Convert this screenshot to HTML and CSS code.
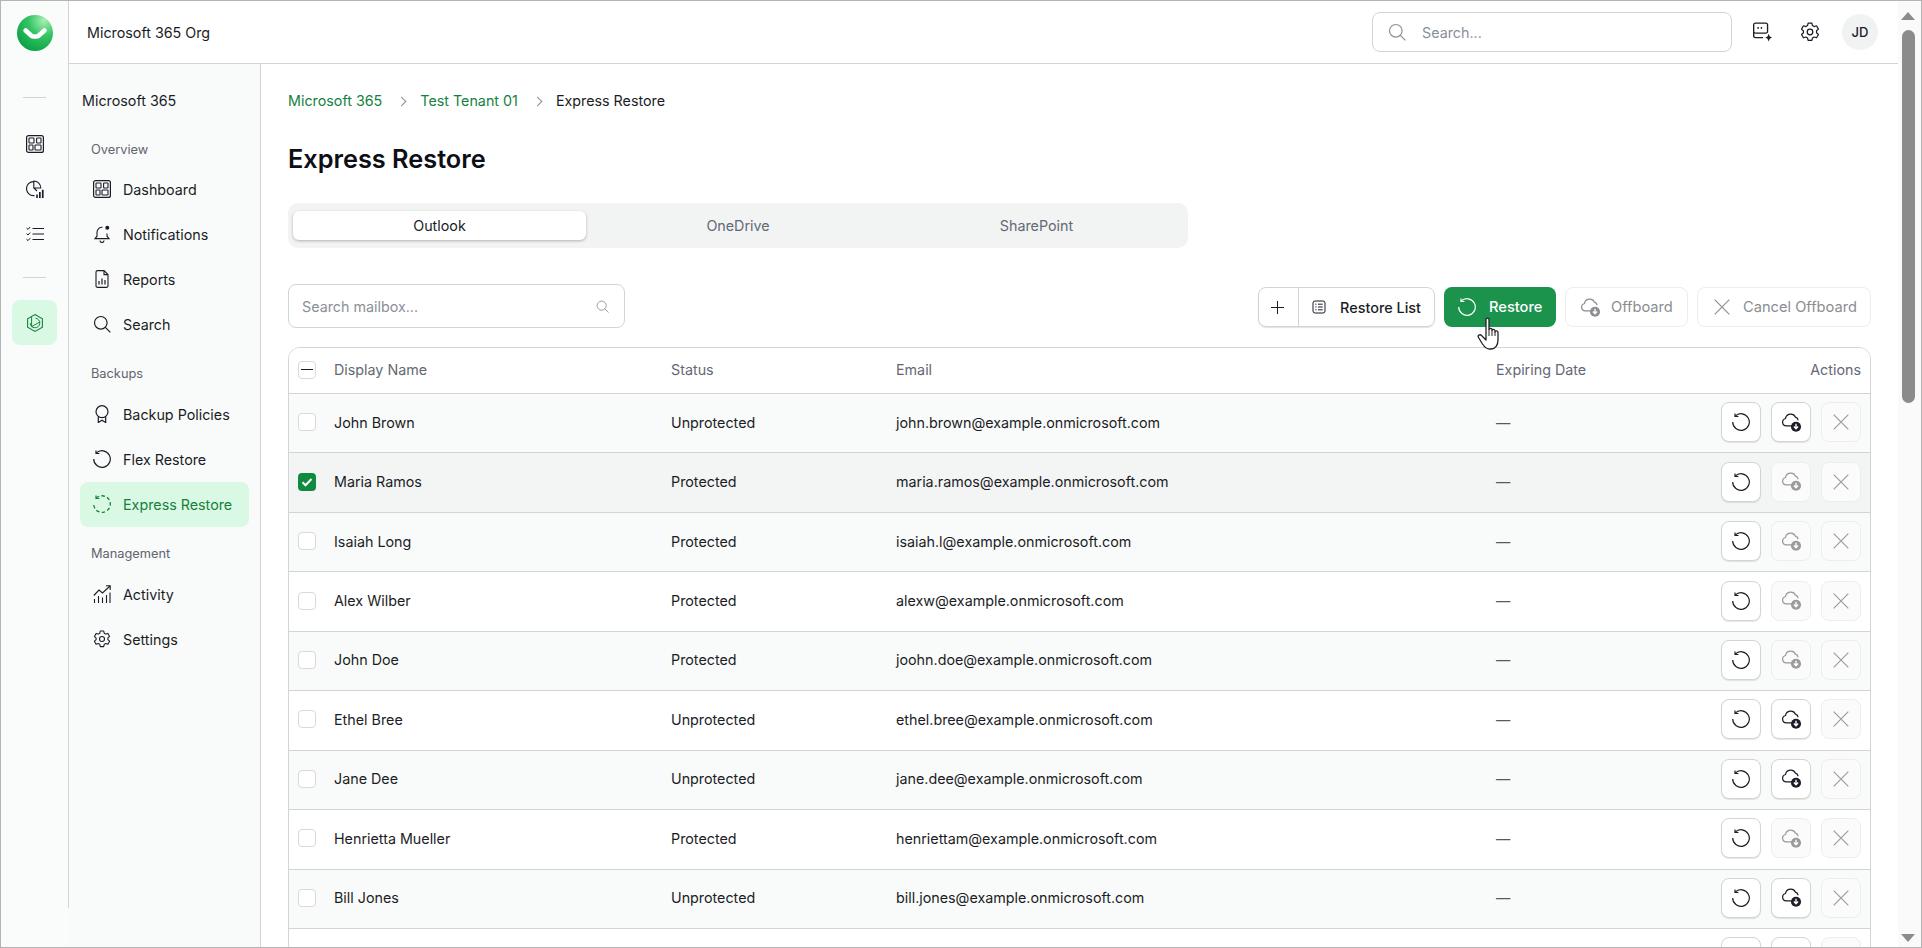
FILE: index.html
```html
<!DOCTYPE html>
<html lang="en">
<head>
    <meta charset="UTF-8">
    <title>Express Restore</title>
    <link rel="stylesheet" href="styles.css">
</head>
<body>
    <svg class="sprites" xmlns="http://www.w3.org/2000/svg">
        <symbol id="i-dash" viewBox="0 0 18 18"><rect x="0.6" y="0.6" width="16.8" height="16.8" rx="2" fill="none" stroke="currentColor" stroke-width="1.2"/><rect x="3" y="3" width="5" height="5" rx="0.6" fill="none" stroke="currentColor" stroke-width="1.1"/><rect x="10.6" y="3" width="4.4" height="5" rx="0.6" fill="none" stroke="currentColor" stroke-width="1.1"/><rect x="3" y="10" width="4" height="5" rx="0.6" fill="none" stroke="currentColor" stroke-width="1.1"/><rect x="9" y="10" width="6" height="5" rx="0.6" fill="none" stroke="currentColor" stroke-width="1.1"/></symbol>
        <symbol id="i-pie" viewBox="0 0 18 18"><path d="M7.5 1.6a7 7 0 1 0 0 14h1M7.8 1v7h7a7 7 0 0 0-7-7zM8 8l3 3" fill="none" stroke="currentColor" stroke-width="1.1"/><path d="M10.2 14.5h1.6V18h-1.6zM13 12h1.7v6H13zM15.9 9.8h1.7V18h-1.7z" fill="currentColor"/></symbol>
        <symbol id="i-tasks" viewBox="0 0 18 18"><path d="M6.5 3.5H18M6.5 9H18M6.5 14.5H18" fill="none" stroke="currentColor" stroke-width="1.1"/><path d="M.5 3l1.500 1.400L4.200 2M.5 8.600L2 10l2.200-2.400M.5 14.200L2 15.600l2.200-2.400" fill="none" stroke="currentColor" stroke-width="1"/></symbol>
        <symbol id="i-hex" viewBox="0 0 18 18"><path d="M9 .6l7.400 4.200v8.400l-7.400 4.200-7.400-4.200V4.800z" fill="none" stroke="currentColor" stroke-width="1.100"/><path d="M9.500 4.200a4.800 4.800 0 1 1-5.300 4.800M5.600 2.800v9.900l8.600-4.900" fill="none" stroke="currentColor" stroke-width="1"/></symbol>
        <symbol id="i-bell" viewBox="0 0 18 18"><path d="M9.500 2.300A5 5 0 0 0 4 7.200v4L2 13.600h14l-2-2.400V8.500M7 15.500a2 2 0 0 0 4 0" fill="none" stroke="currentColor" stroke-width="1.100"/><circle cx="14.300" cy="2.800" r="2" fill="currentColor"/></symbol>
        <symbol id="i-doc" viewBox="0 0 18 18"><path d="M11 .6H4.500A1.500 1.500 0 0 0 3 2.100v13.800a1.500 1.500 0 0 0 1.500 1.500h9a1.500 1.500 0 0 0 1.500-1.500V4.600zM11 .6v4h4" fill="none" stroke="currentColor" stroke-width="1.100"/><path d="M6 11v3.500M9 8.500v6M12 10v4.500" fill="none" stroke="currentColor" stroke-width="1.200"/></symbol>
        <symbol id="i-search" viewBox="0 0 18 18"><circle cx="7.800" cy="7.800" r="6.300" fill="none" stroke="currentColor" stroke-width="1.200"/><path d="M12.300 12.300l5 5" fill="none" stroke="currentColor" stroke-width="1.200"/></symbol>
        <symbol id="i-award" viewBox="0 0 18 18"><circle cx="9" cy="6.700" r="6" fill="none" stroke="currentColor" stroke-width="1.200"/><path d="M5.300 11.500v6L9 15.300l3.700 2.200v-6" fill="none" stroke="currentColor" stroke-width="1.200"/></symbol>
        <symbol id="i-restore" viewBox="0 0 18 18"><path d="M3.200 3.100A8.300 8.300 0 1 1 .7 9" fill="none" stroke="currentColor" stroke-width="1.200"/><path d="M3 .4v3.100h3.400" fill="none" stroke="currentColor" stroke-width="1.200"/></symbol>
        <symbol id="i-restore-dash" viewBox="0 0 18 18"><path d="M3.200 3.100A8.300 8.300 0 1 1 .7 9" fill="none" stroke="currentColor" stroke-width="1.300" stroke-dasharray="3.500 2.300"/><path d="M3 .4v3.100h3.400" fill="none" stroke="currentColor" stroke-width="1.200"/></symbol>
        <symbol id="i-activity" viewBox="0 0 18 18"><path d="M.8 10.500L6 5l3.500 3L17 1M13 .8h4.200V5" fill="none" stroke="currentColor" stroke-width="1.100"/><path d="M1.500 14v4M5.500 11v7M9.500 12.500V18M13.500 10v8M17 7.500V18" fill="none" stroke="currentColor" stroke-width="1.100"/></symbol>
        <symbol id="i-gear" viewBox="0 0 18 18"><path d="M7.300 1h3.400l.5 2.200 1.500.9 2.200-.7 1.700 3-1.700 1.500v1.800l1.700 1.500-1.700 3-2.200-.7-1.500.9-.5 2.200H7.300l-.5-2.200-1.500-.9-2.200.7-1.700-3 1.700-1.500V8.100L1.400 6.400l1.700-3 2.200.7 1.500-.9z" fill="none" stroke="currentColor" stroke-width="1.100" stroke-linejoin="round"/><circle cx="9" cy="9" r="2.500" fill="none" stroke="currentColor" stroke-width="1.100"/></symbol>
        <symbol id="i-chat" viewBox="0 0 18 18"><path d="M3 1h9.500A1.500 1.500 0 0 1 14 2.500v6A1.500 1.500 0 0 1 12.500 10H3A1.500 1.500 0 0 1 1.500 8.500v-6A1.500 1.500 0 0 1 3 1zM1.500 9v3.500A1.500 1.500 0 0 0 3 14h7" fill="none" stroke="currentColor" stroke-width="1.200"/><path d="M5.500 4.500v1.500M8.500 4.500v1.500" stroke="currentColor" stroke-width="1.300"/><path d="M15 10.500l1 2.500 2 1-2 1-1 2.500-1-2.500-2-1 2-1z" fill="currentColor"/></symbol>
        <symbol id="i-cloud" viewBox="0 0 20 20"><path d="M11.500 13.300H5a3.600 3.600 0 0 1-.7-7.100 5 5 0 0 1 9.500-1.300 3.500 3.500 0 0 1 2.500 3" fill="none" stroke="currentColor" stroke-width="1.200"/><circle cx="14.300" cy="14" r="4.800" fill="currentColor"/><path d="M14.300 11.300v4.500M12.300 13.900l2 2 2-2" fill="none" stroke="#fff" stroke-width="1.300"/></symbol>
        <symbol id="i-x" viewBox="0 0 16 16"><path d="M1.500 1.500l13 13M14.500 1.500l-13 13" fill="none" stroke="currentColor" stroke-width="1"/></symbol>
        <symbol id="i-list" viewBox="0 0 14 14"><rect x="1" y="1" width="12" height="12" rx="2" fill="none" stroke="currentColor" stroke-width="1"/><path d="M3.300 4.200h1.200M6 4.200h4.700M3.300 7h1.200M6 7h4.700M3.300 9.800h1.200M6 9.800h4.700" fill="none" stroke="currentColor" stroke-width="1"/></symbol>
    </svg>

    <div class="frame">
        <aside class="rail">
            <div class="logo">
                <svg width="36" height="36" viewBox="0 0 36 36">
                    <defs><radialGradient id="logo-fill" cx="0.75" cy="0.15" r="0.95"><stop offset="0" stop-color="#a8f0b4"/><stop offset="0.45" stop-color="#35c464"/><stop offset="1" stop-color="#08a043"/></radialGradient></defs>
                    <circle cx="18" cy="18" r="18" fill="url(#logo-fill)"/>
                    <path d="M8.600 15.500L14.500 20.800Q15.500 21.500 17 21.500H19Q20.500 21.500 21.500 20.800L27.400 15.500" fill="none" stroke="#fff" stroke-width="4.600" stroke-linecap="round" stroke-linejoin="round"/>
                </svg>
            </div>
            <div class="rail-sep"></div>
            <div class="rail-item"><svg class="ico"><use href="#i-dash"/></svg></div>
            <div class="rail-item"><svg class="ico"><use href="#i-pie"/></svg></div>
            <div class="rail-item"><svg class="ico"><use href="#i-tasks"/></svg></div>
            <div class="rail-sep rail-sep-low"></div>
            <div class="rail-item rail-active"><svg class="ico"><use href="#i-hex"/></svg></div>
        </aside>

        <div class="workspace">
            <header class="topbar">
                <div class="org">Microsoft 365 Org</div>
                <div class="top-search">
                    <svg class="ico"><use href="#i-search"/></svg>
                    <span>Search...</span>
                </div>
                <svg class="ico top-icon"><use href="#i-chat"/></svg>
                <svg class="ico top-icon"><use href="#i-gear"/></svg>
                <div class="avatar">JD</div>
            </header>

            <div class="columns">
                <nav class="sidebar">
                    <div class="side-title">Microsoft 365</div>
                    <div class="side-group">Overview</div>
                    <a class="side-link"><svg class="ico"><use href="#i-dash"/></svg>Dashboard</a>
                    <a class="side-link"><svg class="ico"><use href="#i-bell"/></svg>Notifications</a>
                    <a class="side-link"><svg class="ico"><use href="#i-doc"/></svg>Reports</a>
                    <a class="side-link"><svg class="ico"><use href="#i-search"/></svg>Search</a>
                    <div class="side-group">Backups</div>
                    <a class="side-link"><svg class="ico"><use href="#i-award"/></svg>Backup Policies</a>
                    <a class="side-link"><svg class="ico"><use href="#i-restore"/></svg>Flex Restore</a>
                    <a class="side-link side-active"><svg class="ico"><use href="#i-restore-dash"/></svg>Express Restore</a>
                    <div class="side-group">Management</div>
                    <a class="side-link"><svg class="ico"><use href="#i-activity"/></svg>Activity</a>
                    <a class="side-link"><svg class="ico"><use href="#i-gear"/></svg>Settings</a>
                </nav>

                <main class="content">
                    <div class="crumbs">
                        <a>Microsoft 365</a><span class="crumb-sep"></span><a>Test Tenant 01</a><span class="crumb-sep"></span><span>Express Restore</span>
                    </div>
                    <h1>Express Restore</h1>
                    <div class="tabs">
                        <div class="tab tab-active">Outlook</div>
                        <div class="tab">OneDrive</div>
                        <div class="tab">SharePoint</div>
                    </div>

                    <div class="toolbar">
                        <div class="box-search">
                            <span>Search mailbox...</span>
                            <svg class="ico-sm"><use href="#i-search"/></svg>
                        </div>
                        <div class="btn-join">
                            <span class="join-plus"></span>
                            <span class="join-list"><svg class="ico-list"><use href="#i-list"/></svg>Restore List</span>
                        </div>
                        <div class="btn btn-green"><svg class="ico"><use href="#i-restore"/></svg>Restore</div>
                        <div class="btn btn-off btn-offboard"><svg class="ico-cloud"><use href="#i-cloud"/></svg>Offboard</div>
                        <div class="btn btn-off btn-cancel"><svg class="ico-x"><use href="#i-x"/></svg>Cancel Offboard</div>
                    </div>

                    <div class="table">
                        <div class="row row-head">
                            <div><span class="check check-mixed"></span></div>
                            <div>Display Name</div>
                            <div>Status</div>
                            <div>Email</div>
                            <div>Expiring Date</div>
                            <div class="cell-actions">Actions</div>
                        </div>

                        <div class="row">
                            <div><span class="check"></span></div><div>John Brown</div><div>Unprotected</div><div>john.brown@example.onmicrosoft.com</div><div class="dash">—</div>
                            <div class="cell-actions"><span class="act"><svg class="ico"><use href="#i-restore"/></svg></span><span class="act"><svg class="ico-cloud"><use href="#i-cloud"/></svg></span><span class="act act-off"><svg class="ico-x"><use href="#i-x"/></svg></span></div>
                        </div>
                        <div class="row row-selected">
                            <div><span class="check check-on"><svg viewBox="0 0 18 18"><path d="M4.500 9.300l3 3 6-6.300" fill="none" stroke="#fff" stroke-width="2"/></svg></span></div><div>Maria Ramos</div><div>Protected</div><div>maria.ramos@example.onmicrosoft.com</div><div class="dash">—</div>
                            <div class="cell-actions"><span class="act"><svg class="ico"><use href="#i-restore"/></svg></span><span class="act act-off"><svg class="ico-cloud"><use href="#i-cloud"/></svg></span><span class="act act-off"><svg class="ico-x"><use href="#i-x"/></svg></span></div>
                        </div>
                        <div class="row">
                            <div><span class="check"></span></div><div>Isaiah Long</div><div>Protected</div><div>isaiah.l@example.onmicrosoft.com</div><div class="dash">—</div>
                            <div class="cell-actions"><span class="act"><svg class="ico"><use href="#i-restore"/></svg></span><span class="act act-off"><svg class="ico-cloud"><use href="#i-cloud"/></svg></span><span class="act act-off"><svg class="ico-x"><use href="#i-x"/></svg></span></div>
                        </div>
                        <div class="row">
                            <div><span class="check"></span></div><div>Alex Wilber</div><div>Protected</div><div>alexw@example.onmicrosoft.com</div><div class="dash">—</div>
                            <div class="cell-actions"><span class="act"><svg class="ico"><use href="#i-restore"/></svg></span><span class="act act-off"><svg class="ico-cloud"><use href="#i-cloud"/></svg></span><span class="act act-off"><svg class="ico-x"><use href="#i-x"/></svg></span></div>
                        </div>
                        <div class="row">
                            <div><span class="check"></span></div><div>John Doe</div><div>Protected</div><div>joohn.doe@example.onmicrosoft.com</div><div class="dash">—</div>
                            <div class="cell-actions"><span class="act"><svg class="ico"><use href="#i-restore"/></svg></span><span class="act act-off"><svg class="ico-cloud"><use href="#i-cloud"/></svg></span><span class="act act-off"><svg class="ico-x"><use href="#i-x"/></svg></span></div>
                        </div>
                        <div class="row">
                            <div><span class="check"></span></div><div>Ethel Bree</div><div>Unprotected</div><div>ethel.bree@example.onmicrosoft.com</div><div class="dash">—</div>
                            <div class="cell-actions"><span class="act"><svg class="ico"><use href="#i-restore"/></svg></span><span class="act"><svg class="ico-cloud"><use href="#i-cloud"/></svg></span><span class="act act-off"><svg class="ico-x"><use href="#i-x"/></svg></span></div>
                        </div>
                        <div class="row">
                            <div><span class="check"></span></div><div>Jane Dee</div><div>Unprotected</div><div>jane.dee@example.onmicrosoft.com</div><div class="dash">—</div>
                            <div class="cell-actions"><span class="act"><svg class="ico"><use href="#i-restore"/></svg></span><span class="act"><svg class="ico-cloud"><use href="#i-cloud"/></svg></span><span class="act act-off"><svg class="ico-x"><use href="#i-x"/></svg></span></div>
                        </div>
                        <div class="row">
                            <div><span class="check"></span></div><div>Henrietta Mueller</div><div>Protected</div><div>henriettam@example.onmicrosoft.com</div><div class="dash">—</div>
                            <div class="cell-actions"><span class="act"><svg class="ico"><use href="#i-restore"/></svg></span><span class="act act-off"><svg class="ico-cloud"><use href="#i-cloud"/></svg></span><span class="act act-off"><svg class="ico-x"><use href="#i-x"/></svg></span></div>
                        </div>
                        <div class="row">
                            <div><span class="check"></span></div><div>Bill Jones</div><div>Unprotected</div><div>bill.jones@example.onmicrosoft.com</div><div class="dash">—</div>
                            <div class="cell-actions"><span class="act"><svg class="ico"><use href="#i-restore"/></svg></span><span class="act"><svg class="ico-cloud"><use href="#i-cloud"/></svg></span><span class="act act-off"><svg class="ico-x"><use href="#i-x"/></svg></span></div>
                        </div>
                        <div class="row">
                            <div></div><div></div><div></div><div></div><div></div>
                            <div class="cell-actions"><span class="act"><svg class="ico"><use href="#i-restore"/></svg></span><span class="act"><svg class="ico-cloud"><use href="#i-cloud"/></svg></span><span class="act act-off"><svg class="ico-x"><use href="#i-x"/></svg></span></div>
                        </div>
                    </div>
                </main>
            </div>
        </div>

        <div class="scrollbar">
            <span class="arrow-up"></span>
            <span class="thumb"></span>
            <span class="arrow-down"></span>
        </div>

        <svg class="hand" width="26" height="33" viewBox="0 0 26 33">
            <path d="M9 2.500C9 .6 12 .6 12 2.500V12.500C12 11 15 11 15 12.800V13.500C15 12 18 12 18 14V15C18 13.500 21 13.500 21 15.500V23C21 28 18.500 32 14 32H12.500C9 32 7.500 30 5.500 27L1.500 20.500C.3 18.500 3 16.800 4.500 18.500L9 23z" fill="#fff" stroke="#222" stroke-width="1.300" stroke-linejoin="round"/>
            <path d="M12 12.500V19M15 13.500V19M18 15V19" fill="none" stroke="#222" stroke-width="1"/>
        </svg>
    </div>
</body>
</html>
```
FILE: styles.css
```css
* {
    box-sizing: border-box;
}
html, body {
    margin: 0;
    height: 100%;
    overflow: hidden;
}
body {
    font-family: Inter, "Noto Sans", sans-serif;
    font-size: 14.3px;
    color: #1b1d26;
    background: #fff;
}
.sprites {
    position: absolute;
    width: 0;
    height: 0;
}
.frame {
    position: relative;
    display: flex;
    width: 1922px;
    height: 948px;
    border: 1px solid #b4b4b4;
    overflow: hidden;
}
.ico {
    width: 18px;
    height: 18px;
    flex: none;
}
.ico-sm {
    width: 13px;
    height: 13px;
    flex: none;
}
.ico-list {
    width: 14px;
    height: 14px;
    flex: none;
}
.ico-cloud {
    width: 21px;
    height: 21px;
    flex: none;
}
.ico-x {
    width: 18px;
    height: 18px;
    flex: none;
}

/* left rail */
.rail {
    position: relative;
    display: flex;
    flex-direction: column;
    align-items: center;
    width: 68px;
    flex: none;
    padding-right: 1px;
    background: #fafbfb;
}
.rail::after {
    content: "";
    position: absolute;
    top: 0;
    right: 0;
    bottom: 39px;
    width: 1px;
    background: #d3d5d5;
}
.logo {
    height: 36px;
    margin: 14px 0 0 1px;
}
.logo svg {
    display: block;
}
.rail-sep {
    width: 23px;
    height: 1px;
    margin: 46px 0 23px;
    background: #d3d5d5;
}
.rail-sep-low {
    margin: 21px 0 22px;
}
.rail-item {
    display: flex;
    align-items: center;
    justify-content: center;
    width: 45px;
    height: 45px;
    border-radius: 8px;
}
.rail-active {
    background: #daf9e5;
    color: #17803d;
}

/* header */
.workspace {
    display: flex;
    flex-direction: column;
    flex: 1;
    min-width: 0;
}
.topbar {
    display: flex;
    align-items: center;
    height: 63px;
    flex: none;
    padding-right: 20px;
    border-bottom: 1px solid #d3d5d5;
    background: #fff;
}
.org {
    flex: 1;
    padding-left: 18px;
}
.top-search {
    display: flex;
    align-items: center;
    gap: 16px;
    width: 360px;
    height: 40px;
    margin-right: 19.500px;
    padding-left: 15px;
    border: 1px solid #d3d5d5;
    border-radius: 8px;
    color: #8a8f98;
}
.top-icon {
    margin-right: 28.500px;
    width: 20px;
    height: 20px;
}
.top-icon:last-of-type {
    margin-right: 22px;
}
.avatar {
    display: flex;
    align-items: center;
    justify-content: center;
    width: 36px;
    height: 36px;
    border-radius: 50%;
    background: #f1f3f3;
    font-size: 13px;
    font-weight: 500;
}

/* sidebar */
.columns {
    display: flex;
    flex: 1;
    min-height: 0;
}
.sidebar {
    display: flex;
    flex-direction: column;
    width: 192px;
    flex: none;
    padding: 27px 11px 0;
    border-right: 1px solid #d3d5d5;
    background: #f9fbfa;
}
.side-title {
    line-height: 20px;
    padding-left: 2px;
    margin-bottom: 11.500px;
}
.side-group {
    height: 20px;
    flex: none;
    line-height: 20px;
    margin: 17.500px 0 7.500px 11px;
    font-size: 12.800px;
    color: #5f6470;
}
.side-title + .side-group {
    margin-bottom: 6.500px;
}
.side-link {
    display: flex;
    align-items: center;
    gap: 12px;
    height: 45px;
    flex: none;
    padding-left: 13px;
    border-radius: 8px;
}
.side-active {
    background: #daf9e5;
    color: #17803d;
}

/* main */
.content {
    flex: 1;
    min-width: 0;
    padding: 27px 27px 0;
    background: #fff;
}
.crumbs {
    display: flex;
    align-items: center;
    line-height: 20px;
}
.crumbs a {
    color: #16813f;
}
.crumb-sep {
    width: 7px;
    height: 7px;
    margin: 0 15px 0 16px;
    border-top: 1px solid #8a8f98;
    border-right: 1px solid #8a8f98;
    transform: rotate(45deg);
}
h1 {
    margin: 32px 0 28px;
    font-size: 25.300px;
    line-height: 32px;
    font-weight: 600;
    color: #0d0f17;
}
.tabs {
    display: flex;
    gap: 5.500px;
    width: 900px;
    height: 45px;
    padding: 8px 5px;
    border-radius: 10px;
    background: #f2f4f4;
}
.tab {
    flex: 1;
    display: flex;
    align-items: center;
    justify-content: center;
    border-radius: 6px;
    color: #636874;
}
.tab-active {
    background: #fff;
    color: #1b1d26;
    box-shadow: 0 1px 3px rgba(0, 0, 0, 0.28);
}
.toolbar {
    display: flex;
    align-items: center;
    gap: 9px;
    height: 44px;
    margin-top: 36px;
}
.box-search {
    display: flex;
    align-items: center;
    justify-content: space-between;
    width: 337px;
    height: 44px;
    margin-right: auto;
    padding: 0 15px 0 13px;
    border: 1px solid #d3d5d5;
    border-radius: 8px;
    color: #8a8f98;
}
.btn-join {
    display: flex;
    width: 177px;
    height: 40px;
    margin-top: 2px;
    border: 1px solid #d3d5d5;
    border-radius: 8px;
    box-shadow: 0 1px 1px rgba(0, 0, 0, 0.12);
    font-weight: 500;
}
.join-plus {
    position: relative;
    width: 40px;
    flex: none;
    border-right: 1px solid #d3d5d5;
}
.join-plus::before,
.join-plus::after {
    content: "";
    position: absolute;
    left: 12px;
    top: 18.500px;
    width: 13px;
    height: 1px;
    background: #1b1d26;
}
.join-plus::after {
    transform: rotate(90deg);
}
.join-list {
    display: flex;
    align-items: center;
    gap: 14px;
    padding-left: 13px;
    font-size: 14.450px;
}
.btn {
    display: flex;
    align-items: center;
    gap: 10px;
    height: 40px;
    margin-top: 2px;
    padding-left: 14px;
    border-radius: 8px;
    white-space: nowrap;
    font-size: 14.650px;
}
.btn-green {
    width: 112px;
    gap: 13px;
    background: #1b934c;
    color: #fff;
    font-weight: 500;
}
.btn-off {
    border: 1px solid #eceeee;
    color: #8b8d91;
    background: #fff;
}
.btn-offboard {
    width: 123px;
    padding-left: 14px;
}
.btn-cancel {
    width: 174px;
    gap: 12px;
    padding-left: 15px;
}

/* table */
.table {
    height: 640px;
    margin-top: 19px;
    border: 1px solid #d3d5d5;
    border-radius: 12px 12px 0 0;
    overflow: hidden;
}
.row {
    display: grid;
    grid-template-columns: 45px 337px 225px 600px 1fr 180px;
    align-items: center;
    height: 59.440px;
    padding-bottom: 2px;
    border-bottom: 1px solid #d3d5d5;
    background: #fff;
}
.row:nth-child(even) {
    background: #f9fbfa;
}
.row-head {
    height: 46px;
    background: #fff;
    color: #636874;
}
.row-selected,
.row-selected:nth-child(even) {
    background: #f3f4f4;
}
.dash {
    color: #555a64;
}
.cell-actions {
    display: flex;
    justify-content: flex-end;
    align-items: center;
    gap: 10px;
    padding-right: 9px;
}
.check {
    display: block;
    position: relative;
    width: 18px;
    height: 18px;
    margin-left: 9px;
    border: 1px solid #d8dada;
    border-radius: 4px;
    background: #fff;
}
.check-mixed::before {
    content: "";
    position: absolute;
    left: 2px;
    right: 2px;
    top: 7.500px;
    height: 1.200px;
    background: #1b1d26;
}
.check-on {
    border: none;
    background: #0f8a3f;
}
.check-on svg {
    display: block;
}
.act {
    display: flex;
    align-items: center;
    justify-content: center;
    width: 40px;
    height: 40px;
    border: 1px solid #d3d5d5;
    border-radius: 8px;
    background: #fff;
    box-shadow: 0 1px 1px rgba(0, 0, 0, 0.1);
}
.act-off {
    border-color: #eceeee;
    background: #fbfbfb;
    box-shadow: none;
    color: #9a9a9a;
}

/* scrollbar */
.scrollbar {
    position: relative;
    width: 23px;
    flex: none;
    background: #fafafa;
}
.thumb {
    position: absolute;
    left: 4px;
    top: 29px;
    width: 13px;
    height: 373px;
    border-radius: 7px;
    background: #8b8b8b;
}
.arrow-up,
.arrow-down {
    position: absolute;
    left: 3px;
    width: 0;
    height: 0;
    border-left: 7.500px solid transparent;
    border-right: 7.500px solid transparent;
}
.arrow-up {
    top: 11px;
    border-bottom: 8px solid #8b8b8b;
}
.arrow-down {
    bottom: 5px;
    border-top: 8px solid #8b8b8b;
}
.hand {
    position: absolute;
    left: 1476px;
    top: 316px;
}
```
